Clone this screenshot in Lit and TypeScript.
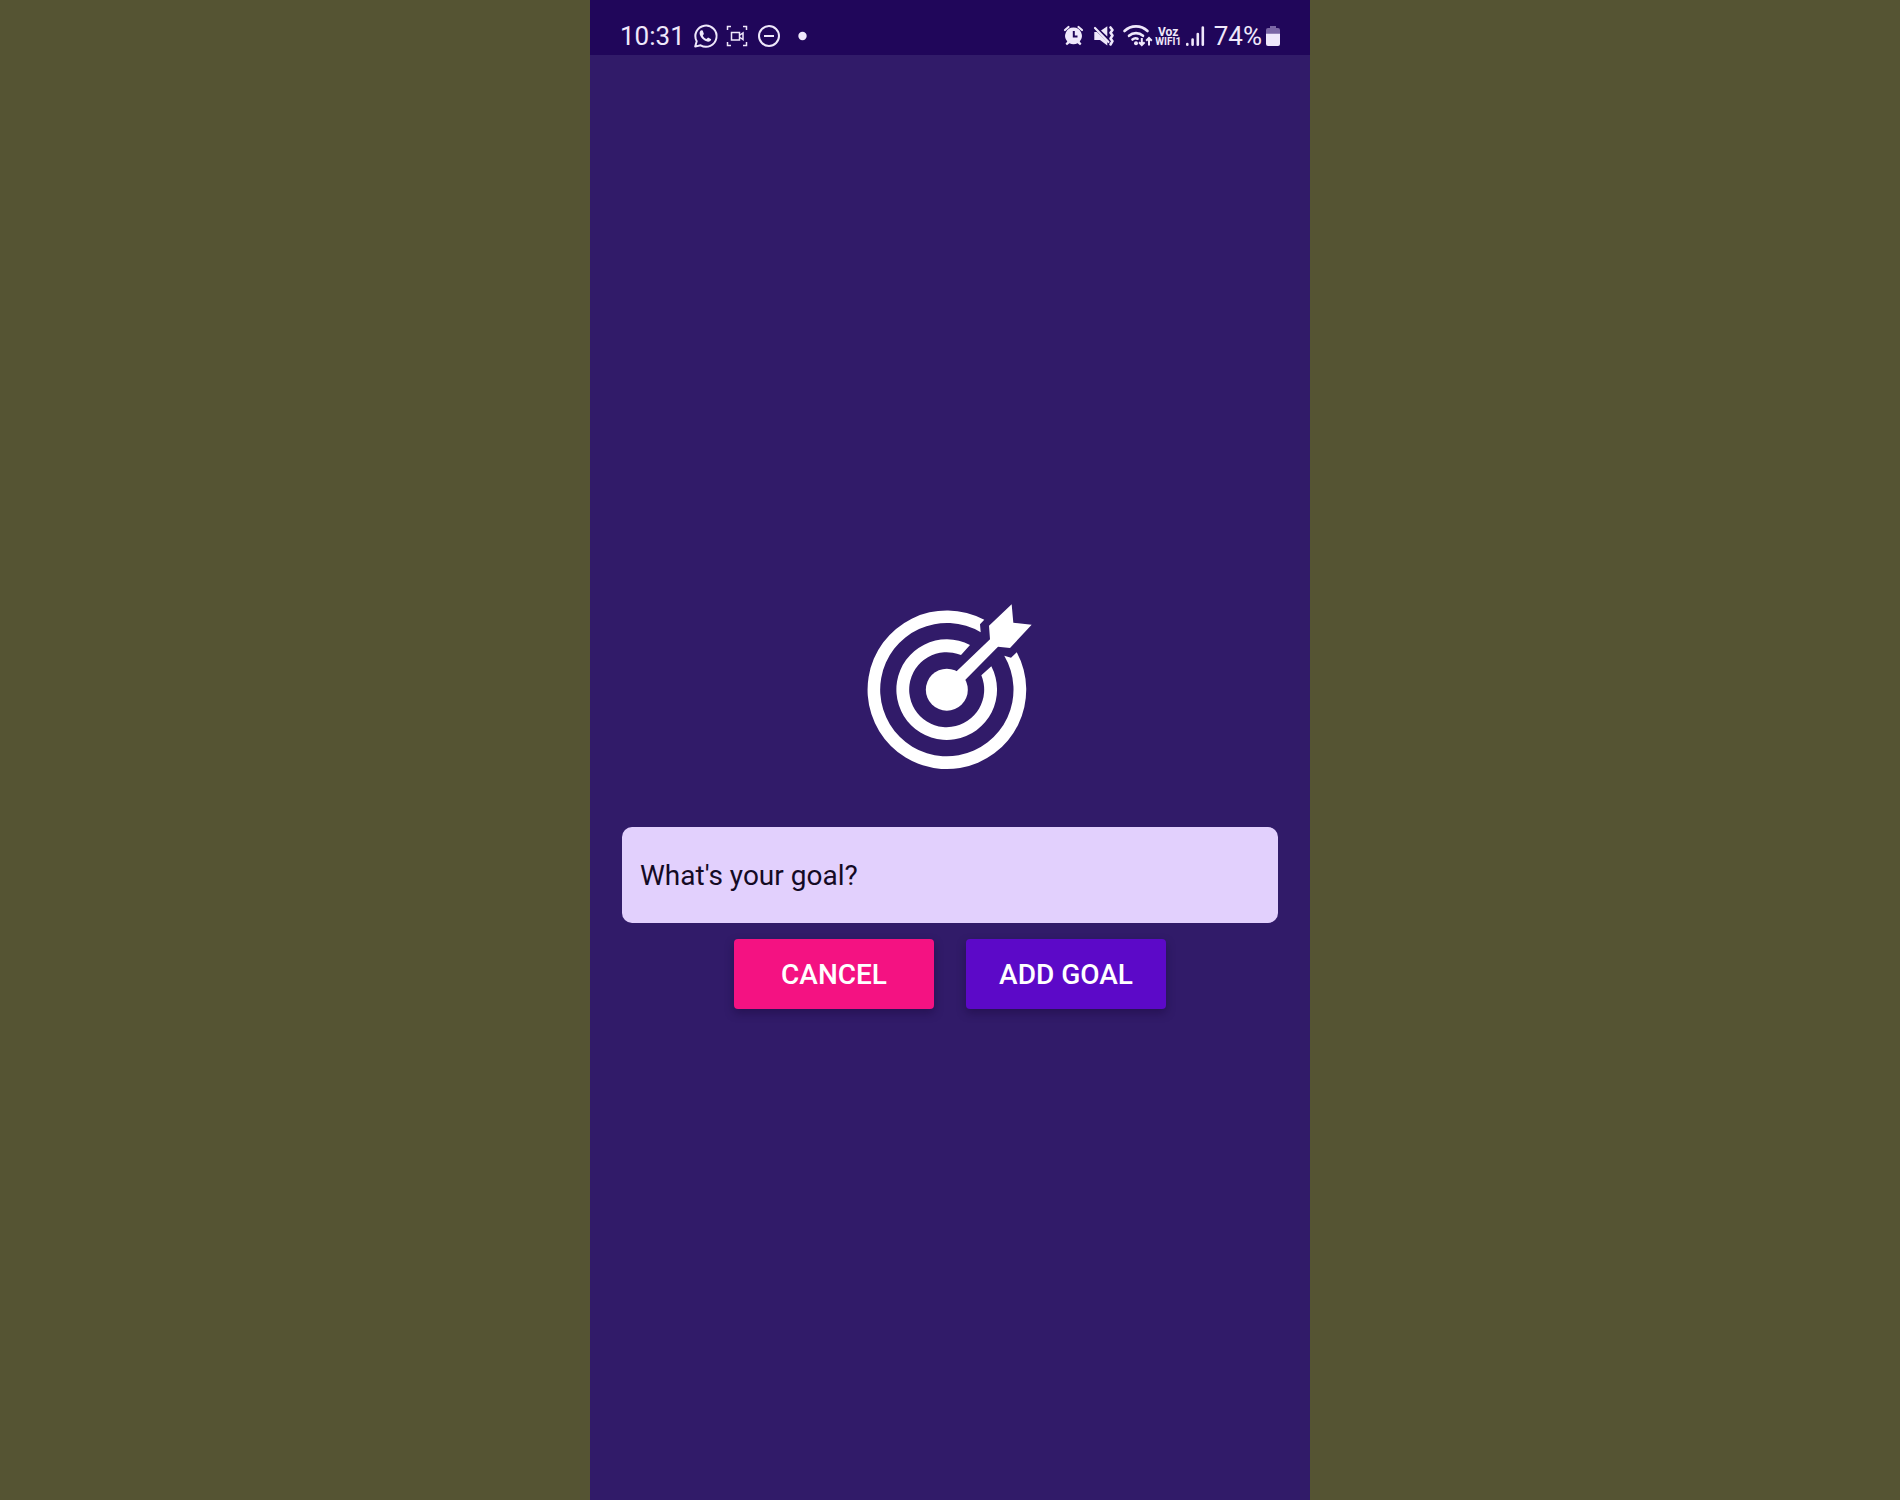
import { LitElement, html, css } from "lit";
import { customElement, state } from "lit/decorators.js";

@customElement("status-bar")
export class StatusBar extends LitElement {
  static styles = css`
    :host {
      display: block;
      background: #20065a;
      color: #efe8fb;
      font: 400 26px/36px Roboto, "Noto Sans", sans-serif;
    }
    .bar {
      display: flex;
      justify-content: space-between;
      padding: 18px 30px 1px;
    }
    .group {
      display: flex;
      align-items: center;
    }
    .left {
      gap: 8px;
    }
    .right {
      gap: 4px;
    }
    svg {
      display: block;
      overflow: visible;
      fill: currentColor;
    }
    .line {
      fill: none;
      stroke: currentColor;
    }
    .dim {
      fill: #7a66a5;
    }
    .carrier {
      display: flex;
      flex-direction: column;
      align-items: center;
      width: 27px;
      padding-top: 2px;
      font-weight: 700;
    }
    .voice {
      font-size: 12px;
      line-height: 10px;
    }
    .network {
      font-size: 10px;
      line-height: 10px;
    }
  `;

  render() {
    return html`
      <div class="bar">
        <div class="group left">
          <span>10:31</span>
          <svg width="24" height="24" viewBox="0 0 24 24" aria-hidden="true">
            <path class="line" stroke-width="2" stroke-linejoin="round" d="M2.200 22.600 3.700 17.300A10.600 10.600 0 1 1 7.600 21.300Z" />
            <path d="M8.500 6.300c-1 .3-2 1.400-1.900 3 .2 3.600 4.600 8 8.400 8.400 1.700.1 3-.9 3.200-2.400l-3.100-1.700-1.600 1.400c-1.700-.7-3-2-3.700-3.600l1.100-1.500-1.200-3.300Z" />
          </svg>
          <svg width="24" height="24" viewBox="0 0 24 24" aria-hidden="true">
            <path class="line" stroke-width="1.500" d="M2.500 6V2.500H6M18 2.500h3.500V6M21.500 18v3.500H18M6 21.500H2.500V18M6.500 8.500h8v7.500h-8zM15 11l3-2v6.500l-3-2" />
          </svg>
          <svg width="24" height="24" viewBox="0 0 24 24" aria-hidden="true">
            <circle class="line" stroke-width="2" cx="12" cy="12" r="10" />
            <path class="line" stroke-width="2" d="M7 12h10" />
          </svg>
          <svg width="24" height="24" viewBox="0 0 24 24" aria-hidden="true">
            <circle cx="13.500" cy="12" r="4.200" />
          </svg>
        </div>
        <div class="group right">
          <svg width="24" height="24" viewBox="1 0 24 24" aria-hidden="true">
            <path fill-rule="evenodd" d="M11.500 3.500a8.300 8.300 0 0 1 6.200 13.900l1.800 2.300-1.500 1.500-2.400-2a8.400 8.400 0 0 1-8.200 0l-2.400 2-1.500-1.500 1.800-2.300a8.300 8.300 0 0 1 6.200-13.900ZM10.800 7v6.500H15.500v-2h-2.700V7Z" />
            <path class="line" stroke-width="2.200" stroke-linecap="round" d="M3 6 6.500 3M20 6 16.500 3" />
          </svg>
          <svg width="24" height="24" viewBox="1 0 24 24" aria-hidden="true">
            <path d="M4.300 8H7L17.300 17.800V21.500L10 16H4.300ZM11 6.500 17.300 2.200V12.500Z" />
            <path class="line" stroke-width="2.200" stroke-linecap="round" d="M5 4 18.500 18" />
            <path class="line" stroke-width="2.600" stroke-linecap="round" stroke-linejoin="round" d="M20.500 3.500 22.500 6 20.500 8.800 22.500 11.600 20.500 14.400 22.500 17.200 20.500 20.500" />
          </svg>
          <svg width="32" height="24" viewBox="1 0 32 24" aria-hidden="true">
            <path class="line" stroke-width="2.600" stroke-linecap="round" d="M6.500 7a16.500 16.500 0 0 1 23 0M11 11.800a10.500 10.500 0 0 1 14 0M14.500 15.500a5 5 0 0 1 5-.8" />
            <circle cx="18" cy="19.200" r="2" />
            <path class="line" stroke-width="2" d="M23.800 14v7M21 18.200l2.800 2.800 2.800-2.800M31 21.500v-7.500M28.200 16.800l2.800-2.800 2.800 2.800" />
          </svg>
          <div class="carrier">
            <span class="voice">Voz</span>
            <span class="network">WIFI1</span>
          </div>
          <svg width="24" height="24" viewBox="1 0 24 24" aria-hidden="true">
            <path class="line" stroke-width="2.600" stroke-linecap="round" d="M2.300 20v.8M7.600 15.500v5.300M12.800 10v10.800M17.800 3.500v17.300" />
          </svg>
          <span>74%</span>
          <svg width="14" height="24" viewBox="0 0 14 24" aria-hidden="true">
            <path class="dim" d="M4 2h6v2h2a2 2 0 0 1 2 2v4H0V6a2 2 0 0 1 2-2h2Z" />
            <path d="M0 9.800h14V20a2 2 0 0 1-2 2H2a2 2 0 0 1-2-2Z" />
          </svg>
        </div>
      </div>
    `;
  }
}

@customElement("goal-form")
export class GoalForm extends LitElement {
  static styles = css`
    :host {
      display: block;
      font-family: Roboto, "Noto Sans", sans-serif;
    }
    .form {
      display: flex;
      flex-direction: column;
      align-items: center;
      padding: 45px 32px 0;
    }
    .target {
      display: block;
      width: 200px;
      height: 200px;
      fill: #fff;
      margin-bottom: 36px;
    }
    .goal {
      box-sizing: border-box;
      width: 100%;
      height: 96px;
      margin: 0 0 16px;
      padding: 0 18px;
      border: 0;
      border-radius: 10px;
      background: #e2d0fd;
      color: #140a24;
      font: 400 28px/36px Roboto, "Noto Sans", sans-serif;
    }
    .goal::placeholder {
      color: #140a24;
      opacity: 1;
    }
    .actions {
      display: flex;
      justify-content: center;
      gap: 32px;
    }
    .action {
      width: 200px;
      height: 70px;
      padding: 2px 0 0;
      border: 0;
      border-radius: 4px;
      color: #fff;
      font: 500 28px/36px Roboto, "Noto Sans", sans-serif;
      text-transform: uppercase;
      box-shadow: 0 4px 10px rgba(20, 5, 50, 0.4);
      cursor: pointer;
    }
    .cancel {
      background: #f41282;
    }
    .add {
      background: #5c09c8;
    }
  `;

  @state() private goal = "";

  private onInput(e: Event) {
    this.goal = (e.target as HTMLInputElement).value;
  }

  private clear() {
    this.goal = "";
  }

  private submit(e: Event) {
    e.preventDefault();
    this.dispatchEvent(new CustomEvent("goal-added", { detail: this.goal }));
    this.clear();
  }

  render() {
    return html`
      <form class="form" @submit=${this.submit}>
        <svg class="target" viewBox="0 3 600 600" aria-hidden="true">
          <path d="M402.800 89.300 390 103 392.100 126.700A200 200 0 1 0 462.800 197.400L483 203 500.300 186.500A238 238 0 1 1 402.800 89.300Z" />
          <path d="M360 165 333 195A112.500 112.500 0 1 0 394 256L424 229A151 151 0 1 1 360 165Z" />
          <circle cx="290.500" cy="299" r="63" />
          <path d="M290 272 420 148 417 107 485 43 490 98 545 104 480 174 444 170 318 298Z" />
        </svg>
        <input
          class="goal"
          type="text"
          placeholder="What's your goal?"
          aria-label="What's your goal?"
          .value=${this.goal}
          @input=${this.onInput}
        />
        <div class="actions">
          <button class="action cancel" type="button" @click=${this.clear}>Cancel</button>
          <button class="action add" type="submit">Add goal</button>
        </div>
      </form>
    `;
  }
}

@customElement("app-root")
export class AppRoot extends LitElement {
  static styles = css`
    :host {
      display: flex;
      justify-content: center;
      min-height: 100vh;
      background: #555433;
    }
    .screen {
      display: flex;
      flex-direction: column;
      width: 100%;
      max-width: 720px;
      background: #311b69;
    }
    .content {
      flex: 1;
      display: flex;
      flex-direction: column;
      justify-content: center;
    }
  `;

  render() {
    return html`
      <div class="screen">
        <status-bar></status-bar>
        <main class="content">
          <goal-form></goal-form>
        </main>
      </div>
    `;
  }
}
